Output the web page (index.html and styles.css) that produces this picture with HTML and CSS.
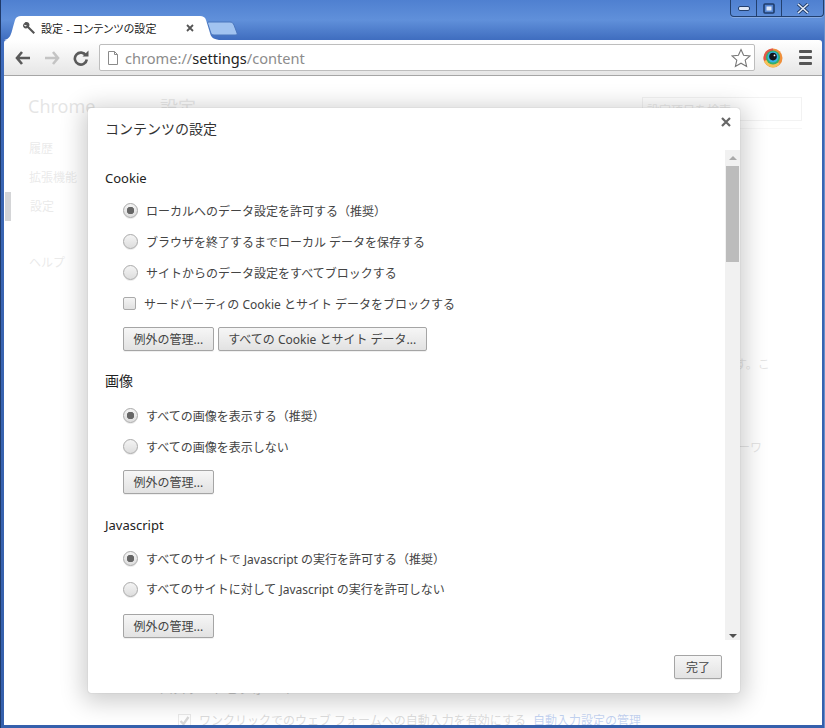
FILE: index.html
```html
<!DOCTYPE html>
<html lang="ja">
<head>
<meta charset="utf-8">
<title>設定 - コンテンツの設定</title>
<link rel="stylesheet" href="styles.css">
</head>
<body>
<div class="window">
  <div class="winctl">
    <div class="wbtn w-min"><svg width="12" height="6" viewBox="0 0 12 6"><rect x=".5" y=".5" width="11" height="4" rx="1.5" fill="#dfe8f6" stroke="#23406f"/></svg></div>
    <div class="wbtn w-max"><svg width="12" height="11" viewBox="0 0 12 11"><rect x="1" y="1" width="10" height="9" rx="1" fill="none" stroke="#1f3c6b" stroke-width="1.6"/><rect x="3.5" y="3.5" width="5" height="4" fill="#dfe8f6"/></svg></div>
    <div class="wbtn w-close"><svg width="14" height="11" viewBox="0 0 14 11"><path d="M2 1 L12 10 M12 1 L2 10" stroke="#23406f" stroke-width="3.4"/><path d="M2 1 L12 10 M12 1 L2 10" stroke="#e6edf8" stroke-width="1.5"/></svg></div>
  </div>
  <div class="tabstrip">
    <div class="tab">
      <svg class="tab-shape" width="216" height="25" viewBox="0 0 216 25"><path d="M0 25 C6 24 7 20 9 12 L11 5 C12 2 14 1 17 1 L196 1 C199 1 201 2 202 5 L206 18 C207 22 209 24 215 25 Z" fill="#fff"/></svg>
      <svg class="wrench" width="14" height="14" viewBox="0 0 14 14"><path d="M1 3.5 L3.5 1 C5.5 0.5 7.5 1.5 7.5 4 L7 5.5 L13 11.5 L11.5 13 L5.5 7 L4 7.5 C2 7.5 0.5 5.5 1 3.5 L3.5 5.5 L5 4.5 Z" fill="#555"/></svg>
      <span class="tab-title">設定 - コンテンツの設定</span>
      <svg class="tab-x" width="8" height="8" viewBox="0 0 8 8"><path d="M1 1 L7 7 M7 1 L1 7" stroke="#555" stroke-width="1.8"/></svg>
    </div>
    <svg class="newtab" width="32" height="15" viewBox="0 0 32 15"><path d="M1 1 L23 1 C25 1 26 2 27 4 L30 12 C30.5 13.5 30 14 28 14 L7 14 C5 14 4 13 3.5 11 L0.5 2 Z" fill="#a1c3f0" stroke="#4a76bd"/></svg>
  </div>
  <div class="toolbar">
    <svg class="nav" width="16" height="14" viewBox="0 0 16 14"><path d="M7 1 L2 7 L7 13 M2 7 L15 7" fill="none" stroke="#5a5a5a" stroke-width="2.6"/></svg>
    <svg class="nav" width="16" height="14" viewBox="0 0 16 14"><path d="M9 1 L14 7 L9 13 M14 7 L1 7" fill="none" stroke="#c4c4c4" stroke-width="2.6"/></svg>
    <svg class="nav" width="16" height="16" viewBox="0 0 16 16"><path d="M13 5.5 A6 6 0 1 0 13.8 9.5" fill="none" stroke="#5a5a5a" stroke-width="2.6"/><path d="M9.5 6.5 L15.5 6.5 L15.5 0.5 Z" fill="#5a5a5a"/></svg>
    <div class="omnibox">
      <svg class="pageicon" width="12" height="16" viewBox="0 0 12 16"><path d="M1.5 1.5 L7.5 1.5 L10.5 4.5 L10.5 14.5 L1.5 14.5 Z M7.5 1.5 L7.5 4.5 L10.5 4.5" fill="#fff" stroke="#8a8a8a"/></svg>
      <span class="url">chrome://<b>settings</b>/content</span>
      <svg class="star" width="20" height="20" viewBox="0 0 20 20"><path d="M10 1.5 L12.6 7.3 L19 8 L14.2 12.2 L15.6 18.5 L10 15.2 L4.4 18.5 L5.8 12.2 L1 8 L7.4 7.3 Z" fill="#fff" stroke="#777" stroke-width="1.1"/></svg>
    </div>
    <svg class="ext" width="20" height="20" viewBox="0 0 20 20"><circle cx="10" cy="10" r="9.5" fill="#ef8f3a"/><path d="M10 .5 A9.5 9.5 0 0 0 1 13 L10 10 Z" fill="#e2574c"/><path d="M1 13 A9.5 9.5 0 0 0 17 16 L10 10 Z" fill="#f5c25a"/><circle cx="10" cy="9.5" r="7" fill="#35b06a"/><circle cx="10" cy="9" r="5.5" fill="#36b3e6"/><circle cx="10" cy="8.6" r="3.8" fill="#10151c"/><circle cx="11.5" cy="7.4" r=".9" fill="#fff"/></svg>
    <div class="menu"><i></i><i></i><i></i></div>
  </div>
  <div class="content">
    <div class="page">
      <nav class="side">
        <div class="brand">Chrome</div>
        <div class="side-item">履歴</div>
        <div class="side-item">拡張機能</div>
        <div class="side-item current">設定</div>
        <div class="side-item help">ヘルプ</div>
      </nav>
      <main class="main">
        <header class="page-head">
          <h1>設定</h1>
          <div class="search">設定項目を検索</div>
        </header>
        <div class="frag frag-a">す。こ</div>
        <div class="frag frag-b">ーワ</div>
        <div class="frag frag-c">パスワードとフォーム</div>
        <label class="autofill"><span class="ghost-check"><svg width="11" height="11" viewBox="0 0 11 11"><path d="M1.5 6 L4.5 9 L9.5 2" fill="none" stroke="#666" stroke-width="2.4"/></svg></span>ワンクリックでのウェブ フォームへの自動入力を有効にする <a>自動入力設定の管理</a></label>
      </main>
    </div>
    <div class="veil"></div>
    <section class="dialog">
      <h2 class="dlg-title">コンテンツの設定</h2>
      <svg class="dlg-x" width="10" height="10" viewBox="0 0 10 10"><path d="M1 1 L9 9 M9 1 L1 9" stroke="#666" stroke-width="2.2"/></svg>
      <div class="dlg-body">
        <div class="dlg-scroll">
          <h3>Cookie</h3>
          <div class="opt first"><span class="radio on"></span>ローカルへのデータ設定を許可する（推奨）</div>
          <div class="opt"><span class="radio"></span>ブラウザを終了するまでローカル データを保存する</div>
          <div class="opt"><span class="radio"></span>サイトからのデータ設定をすべてブロックする</div>
          <div class="opt chk"><span class="check"></span>サードパーティの Cookie とサイト データをブロックする</div>
          <div class="btns btns-cookie"><button>例外の管理...</button><button>すべての Cookie とサイト データ...</button></div>
          <h3 class="cjk">画像</h3>
          <div class="opt first first-img"><span class="radio on"></span>すべての画像を表示する（推奨）</div>
          <div class="opt"><span class="radio"></span>すべての画像を表示しない</div>
          <div class="btns btns-img"><button>例外の管理...</button></div>
          <h3>Javascript</h3>
          <div class="opt first first-js"><span class="radio on"></span>すべてのサイトで Javascript の実行を許可する（推奨）</div>
          <div class="opt opt-js"><span class="radio"></span>すべてのサイトに対して Javascript の実行を許可しない</div>
          <div class="btns btns-js"><button>例外の管理...</button></div>
        </div>
        <div class="scrollbar">
          <span class="arrow up"></span>
          <div class="track"><div class="thumb"></div></div>
          <span class="arrow down"></span>
        </div>
      </div>
      <div class="dlg-foot"><button>完了</button></div>
    </section>
  </div>
</div>
</body>
</html>
```
FILE: styles.css
```css
* { box-sizing: border-box; }
html, body { margin: 0; height: 100%; overflow: hidden; }
body { font-family: "Noto Sans", "Noto Sans CJK JP", sans-serif; font-size: 12px; color: #333; }
.window {
  position: relative;
  width: 825px; height: 728px;
  display: flex; flex-direction: column;
  padding: 0 3px 3px 4px;
  background: linear-gradient(#4f80d0 0, #6090da 20px, #3f6dbf 40px, #3a66b4 100px, #3560ac 100%);
  box-shadow: inset 1px 0 #1f3a6a, inset -1px 0 #6a8fcb;
}
.winctl {
  position: absolute; top: 0; left: 730px;
  display: flex; height: 17px;
  border: 1px solid #22406f; border-top: 0; border-radius: 0 0 4px 4px;
  box-shadow: 0 1px rgba(255,255,255,.25);
}
.wbtn { display: flex; align-items: center; justify-content: center; }
.wbtn + .wbtn { border-left: 1px solid #22406f; }
.w-min { width: 25px; padding-top: 2px; }
.w-max { width: 25px; }
.w-close { width: 42px; }
.tabstrip { height: 40px; padding: 15px 0 0 0; display: flex; flex: none; align-items: flex-start; }
.tab {
  position: relative; width: 203px; height: 25px; margin-left: 0;
  display: flex; align-items: center; padding-left: 18px;
}
.tab-shape { position: absolute; left: 0; top: 0; }
.wrench, .tab-title, .tab-x { position: relative; }
.tab-title { margin-left: 5px; font-size: 11px; font-feature-settings: "palt"; letter-spacing: .12px; color: #222; white-space: nowrap; width: 140px; }
.tab-x { margin-left: 5px; }
.newtab { margin: 6px 0 0 0; }
.toolbar {
  height: 36px; flex: none;
  display: flex; align-items: center;
  background: linear-gradient(#fff, #e6e6e6);
  border-bottom: 1px solid #a6a6a6;
  padding-left: 11px;
  border-radius: 3px 3px 0 0;
}
.nav { margin-right: 13px; flex: none; }
.omnibox {
  width: 656px; height: 27px; margin-left: -3px;
  display: flex; align-items: center;
  background: #fff; border: 1px solid #bdbdbd; border-radius: 2px;
  padding: 0 3px 0 7px;
}
.url { margin-left: 6px; font-size: 14.6px; color: #8c8c8c; flex: 1; white-space: nowrap; }
.url b { font-weight: 400; color: #222; }
.ext { margin-left: 8px; }
.menu { margin-left: 16px; width: 13px; display: flex; flex-direction: column; gap: 3px; }
.menu i { display: block; height: 3px; background: #555; border-radius: 1px; }
.content { position: relative; flex: 1; overflow: hidden; background: #fff; }
.page { display: flex; height: 100%; color: #333; }
.side { width: 156px; flex: none; padding-top: 18px; }
.brand { font-size: 18px; color: #999; margin: 0 0 14px 24px; height: 26px; }
.side-item { height: 29px; line-height: 29px; padding-left: 25px; font-size: 12px; color: #aaa; }
.side-item.current { border-left: 6px solid #555860; padding-left: 19px; margin-left: 1px; }
.side-item.help { margin-top: 27px; }
.main { position: relative; flex: 1; padding-right: 20px; }
.page-head { display: flex; justify-content: space-between; padding-top: 21px; border-bottom: 1px solid #ddd; height: 53px; }
h1 { margin: -3px 0 0; font-size: 18px; line-height: 26px; font-weight: 400; color: #aaa; }
.search { width: 160px; height: 24px; border: 1px solid #ccc; font-size: 12px; padding: 3px 4px; color: #aaa; }
.frag { position: absolute; font-size: 12px; color: #999; }
.frag-a { top: 279px; left: 575px; }
.frag-b { top: 362px; left: 578px; }
.frag-c { top: 602px; left: 0; font-size: 13px; color: #333; }
.autofill { position: absolute; top: 635px; left: 18px; font-size: 12px; white-space: nowrap; color: #777; display: flex; align-items: center; gap: 8px; }
.autofill a { color: #15c; margin-left: -1px; }
.ghost-check { width: 13px; height: 13px; border: 1px solid #aaa; display: flex; }
.veil { position: absolute; inset: 0; background: rgba(255,255,255,.75); }
.dialog {
  position: absolute; left: 84px; top: 32px;
  width: 652px; height: 585px;
  background: #fff; border-radius: 3px;
  box-shadow: 0 4px 23px 5px rgba(0,0,0,.2), 0 0 1px rgba(0,0,0,.3);
  display: flex; flex-direction: column;
}
.dlg-title { margin: 0; padding: 10px 17px 0; height: 42px; font-size: 14px; font-weight: 400; color: #333; }
.dlg-x { position: absolute; top: 9px; right: 9px; }
.dlg-body { height: 490px; display: flex; flex: none; }
.dlg-scroll { flex: 1; padding: 19px 17px 0; overflow: hidden; }
h3 { margin: 0; font-size: 13px; font-weight: 400; color: #222; line-height: 18px; }
h3.cjk { font-size: 14px; }
.opt { display: flex; align-items: center; height: 31px; padding-left: 18px; color: #444; white-space: nowrap; font-size: 12px; }
.opt.first { margin-top: 8px; }
.opt.first-img { margin-top: 10px; }
.opt.first-js { margin-top: 9px; }
.opt-js { height: 30px; }
.radio {
  width: 15px; height: 15px; border-radius: 50%; margin-right: 8px; flex: none;
  border: 1px solid #aaa; background: linear-gradient(#f4f4f4, #ddd);
  box-shadow: 0 1px rgba(0,0,0,.08);
}
.radio.on { background: radial-gradient(circle, #666 0 3.5px, transparent 4px), linear-gradient(#f4f4f4, #ddd); }
.check { width: 13px; height: 13px; border: 1px solid #aaa; border-radius: 2px; margin-right: 8px; background: linear-gradient(#f4f4f4, #e0e0e0); flex: none; }
.btns { display: flex; gap: 4px; padding-left: 18px; }
.btns-cookie { margin: 8px 0 21px; }
.btns-img { margin: 8px 0 22px; }
.btns-js { margin: 10px 0 0; }
button {
  height: 24px; padding: 0 9.5px; font: inherit; font-size: 12px; color: #444;
  border: 1px solid #a5a5a5; border-radius: 2px;
  background: linear-gradient(#f6f6f6, #e2e2e2);
  box-shadow: 0 1px rgba(0,0,0,.06);
}
.scrollbar { width: 15px; flex: none; display: flex; flex-direction: column; align-items: center; background: #f1f1f1; margin-bottom: 0; }
.track { flex: 1; width: 100%; padding: 0 1px; }
.thumb { height: 96px; background: #bcbcbc; }
.arrow { height: 16px; width: 0; border-left: 4px solid transparent; border-right: 4px solid transparent; flex: none; }
.arrow.up { border-bottom: 4px solid #aaa; height: 0; margin: 6px 0 6px; }
.arrow.down { border-top: 4px solid #505050; height: 0; margin: 6px 0 2px; }
.dlg-foot { flex: 1; display: flex; justify-content: flex-end; padding: 15px 18px 0 0; }
.dlg-foot button { width: 48px; padding: 0; }
```
